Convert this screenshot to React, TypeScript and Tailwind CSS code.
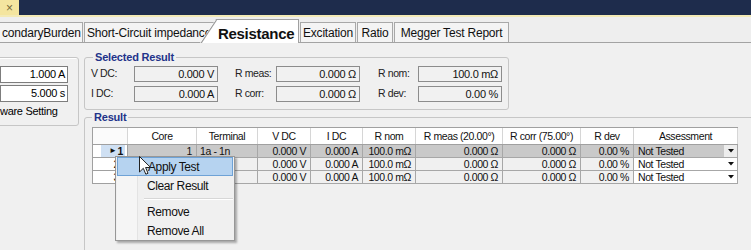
import React from "react";

const W = [
  "w-[35px]",
  "w-[69px]",
  "w-[61px]",
  "w-[53px]",
  "w-[52px]",
  "w-[53px]",
  "w-[87px]",
  "w-[78px]",
  "w-[53px]",
  "w-[104px]",
];

const headers = [
  "",
  "Core",
  "Terminal",
  "V DC",
  "I DC",
  "R nom",
  "R meas (20.00°)",
  "R corr (75.00°)",
  "R dev",
  "Assessment",
];

const rows = [
  ["1", "1a - 1n", "0.000 V", "0.000 A", "100.0 mΩ", "0.000 Ω", "0.000 Ω", "0.00 %", "Not Tested"],
  ["2", "", "0.000 V", "0.000 A", "100.0 mΩ", "0.000 Ω", "0.000 Ω", "0.00 %", "Not Tested"],
  ["3", "", "0.000 V", "0.000 A", "100.0 mΩ", "0.000 Ω", "0.000 Ω", "0.00 %", "Not Tested"],
];

function Arrow() {
  return (
    <svg width="6" height="4" viewBox="0 0 6 4">
      <path d="M0 0 H6 L3 3.5 Z" fill="#111" />
    </svg>
  );
}

function ValueBox({ v }: { v: string }) {
  return (
    <div className="w-[84px] h-[16px] border border-[#8c8c8c] bg-[#f1f1f1] flex items-center justify-end pr-[3px] text-[11px] tracking-[-0.3px] leading-none text-[#111]">
      {v}
    </div>
  );
}

export default function App() {
  return (
    <div className="relative w-[751px] h-[250px] overflow-hidden bg-[#f0f0f0] font-['Liberation_Sans',Arial,sans-serif] text-black">
      {/* title bar */}
      <div className="flex h-[15px] bg-[#1e2c4c]">
        <div className="w-[19px] bg-[#f4e59f] flex items-center justify-center text-[12px] leading-none text-[#75683a]">×</div>
      </div>
      <div className="h-[2px] bg-[#f3eab6]" />

      {/* tabs */}
      <div className="flex items-end h-[26px] border-b border-[#a3a3a3] bg-[#eeeeee] text-[12px] tracking-[-0.2px] leading-none text-[#111]">
        <div className="-ml-[2px] w-[85px] h-[20px] border border-b-0 border-[#a8a8a8] bg-[#f4f4f4] flex items-center pl-[3px] whitespace-nowrap overflow-hidden">
          condaryBurden
        </div>
        <div className="ml-[1px] w-[140px] h-[20px] border border-b-0 border-[#a8a8a8] bg-[#f4f4f4] flex items-center pl-[2px] whitespace-nowrap overflow-hidden">
          Short-Circuit impedance
        </div>
        <div className="relative z-10 -ml-[24px] -mb-[1px] w-[99px] h-[24px] bg-white border-t border-r border-[#a0a0a0] [clip-path:polygon(16px_0,100%_0,100%_100%,0_100%)] flex items-center pl-[18px] pt-[3px] text-[15px] font-bold tracking-[-0.3px] text-[#111]">
          <svg className="absolute left-0 top-0" width="17" height="24" viewBox="0 0 17 24">
            <line x1="0.5" y1="24" x2="16.5" y2="0" stroke="#9a9a9a" strokeWidth="1.2" />
          </svg>
          Resistance
        </div>
        <div className="ml-[1px] w-[56px] h-[20px] border border-b-0 border-[#a8a8a8] bg-[#f4f4f4] flex items-center justify-center">
          Excitation
        </div>
        <div className="ml-[1px] w-[36px] h-[20px] border border-b-0 border-[#a8a8a8] bg-[#f4f4f4] flex items-center justify-center">
          Ratio
        </div>
        <div className="ml-[1px] w-[115px] h-[20px] border border-b-0 border-[#a8a8a8] bg-[#f4f4f4] flex items-center justify-center whitespace-nowrap">
          Megger Test Report
        </div>
      </div>

      {/* content */}
      <div className="flex">
        {/* left group */}
        <div className="-ml-[3px] mt-[14px] w-[82px] h-[69px] border border-[#c6c6c6] rounded-[3px] shadow-[inset_1px_1px_0_#ffffff] pl-[2px] pt-[8px] shrink-0">
          <div className="w-[68px] h-[17px] border border-[#7d7d7d] bg-white flex items-center justify-end pr-[2px] text-[11px] tracking-[-0.3px] leading-none">
            1.000 A
          </div>
          <div className="mt-[2px] w-[68px] h-[17px] border border-[#7d7d7d] bg-white flex items-center justify-end pr-[2px] text-[11px] tracking-[-0.3px] leading-none">
            5.000 s
          </div>
          <div className="mt-[3px] text-[11px] tracking-[-0.3px] leading-[13px] whitespace-nowrap overflow-hidden">
            ware Setting
          </div>
        </div>

        {/* right column */}
        <div className="ml-[5px] flex flex-col">
          <fieldset className="mt-[8px] w-[425px] h-[59px] border border-[#c6c6c6] rounded-[3px]">
            <legend className="ml-[8px] px-[2px] text-[11px] leading-[12px] font-bold text-[#22338a] tracking-[-0.2px]">
              Selected Result
            </legend>
            <div className="pt-[3px] pl-[6px] text-[10.5px] tracking-[-0.4px] text-[#222]">
              <div className="flex items-center h-[16px]">
                <div className="w-[43px]">V DC:</div>
                <ValueBox v="0.000 V" />
                <div className="ml-[17px] w-[41px]">R meas:</div>
                <ValueBox v="0.000 Ω" />
                <div className="ml-[18px] w-[40px]">R nom:</div>
                <ValueBox v="100.0 mΩ" />
              </div>
              <div className="mt-[4px] flex items-center h-[16px]">
                <div className="w-[43px]">I DC:</div>
                <ValueBox v="0.000 A" />
                <div className="ml-[17px] w-[41px]">R corr:</div>
                <ValueBox v="0.000 Ω" />
                <div className="ml-[18px] w-[40px]">R dev:</div>
                <ValueBox v="0.00 %" />
              </div>
            </div>
          </fieldset>

          <fieldset className="mt-[1px] w-[700px] h-[200px] border border-[#c6c6c6] rounded-[3px]">
            <legend className="ml-[7px] px-[2px] text-[11px] leading-[12px] font-bold text-[#22338a] tracking-[-0.2px]">
              Result
            </legend>
            {/* table */}
            <div className="ml-[7px] mt-[4px] w-[646px] border-l border-t border-[#a0a0a0] text-[10.5px] tracking-[-0.4px] leading-none text-[#111]">
              <div className="flex h-[17px] bg-white border-b border-[#a0a0a0]">
                {headers.map((h, i) => (
                  <div
                    key={i}
                    className={`${W[i]} h-full border-r border-[#d6d6d6] flex items-center justify-center whitespace-nowrap ${
                      i === 0 ? "bg-[#fbfbfb]" : ""
                    }`}
                  >
                    {h}
                  </div>
                ))}
              </div>
              {rows.map((r, ri) => {
                const sel = ri === 0;
                const cellBg = sel ? "bg-[#c9c9c9]" : "bg-[#f0f0f0]";
                return (
                  <div key={ri} className="flex h-[13px]">
                    <div className={`${W[0]} h-full border-r border-b border-[#a0a0a0] bg-white flex items-center justify-end pr-[8px]`}>
                      {sel ? (
                        <div className="flex items-center h-full bg-[#cfe0f3] pl-[8px] pr-[2px] -mr-[6px]">
                          <span className="text-[8px] mr-[1px]">►</span>
                          <span className="font-bold">1</span>
                        </div>
                      ) : (
                        r[0]
                      )}
                    </div>
                    <div className={`${W[1]} h-full border-r border-b border-[#a7a7a7] ${cellBg} flex items-center justify-end pr-[4px]`}>
                      {sel ? r[0] : ""}
                    </div>
                    <div className={`${W[2]} h-full border-r border-b border-[#a7a7a7] ${cellBg} flex items-center pl-[3px]`}>
                      {r[1]}
                    </div>
                    {r.slice(2, 8).map((v, ci) => (
                      <div
                        key={ci}
                        className={`${W[ci + 3]} h-full border-r border-b border-[#a7a7a7] ${cellBg} flex items-center justify-end pr-[4px] whitespace-nowrap`}
                      >
                        {v}
                      </div>
                    ))}
                    <div className={`${W[9]} h-full border-r border-b border-[#a7a7a7] ${sel ? "bg-[#c9c9c9]" : "bg-white"} flex items-center`}>
                      <span className="pl-[4px] flex-1">{r[8]}</span>
                      <div className={`w-[13px] h-full flex items-center justify-center ${sel ? "bg-[#ededed]" : "bg-white"}`}>
                        <Arrow />
                      </div>
                    </div>
                  </div>
                );
              })}
            </div>
          </fieldset>
        </div>
      </div>

      {/* context menu */}
      <div className="absolute left-[115px] top-[156px] w-[120px] h-[85px] border border-[#979797] bg-[#f0f0f0] shadow-[2px_2px_2px_rgba(0,0,0,0.3)] text-[12px] tracking-[-0.4px] leading-none text-[#111]">
        <div className="absolute left-[1px] top-0 bottom-0 w-[21px] bg-[#f5f5f5] border-r border-[#e3e3e3]" />
        <div className="relative flex flex-col">
          <div className="h-[19px] mx-[1px] flex items-center pl-[30px] bg-[#b6d3f0] border border-[#6ea2d6]">
            Apply Test
          </div>
          <div className="h-[20px] flex items-center pl-[31px]">Clear Result</div>
          <div className="h-[6px] flex items-center pl-[28px] pr-[1px]">
            <div className="w-full h-[2px] border-t border-[#d7d7d7] border-b border-b-white" />
          </div>
          <div className="h-[19px] flex items-center pl-[31px]">Remove</div>
          <div className="h-[19px] flex items-center pl-[31px]">Remove All</div>
        </div>
      </div>

      {/* mouse cursor */}
      <svg className="absolute left-[139px] top-[156px]" width="13" height="20" viewBox="0 0 13 20">
        <path d="M0.5 0.5 L0.5 16 L4.3 12.3 L6.8 18.2 L9 17.3 L6.6 11.5 L11.6 11.5 Z" fill="#fff" stroke="#222" strokeWidth="1" strokeLinejoin="round" />
      </svg>
    </div>
  );
}
